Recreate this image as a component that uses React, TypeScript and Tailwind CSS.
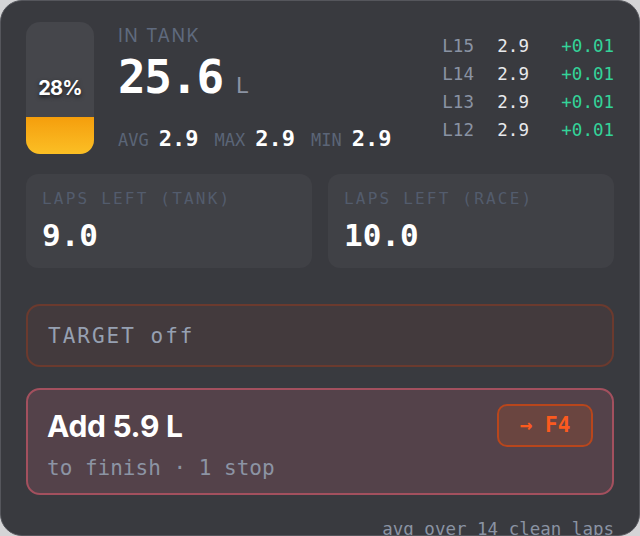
import React from "react";

const mono = "font-['DejaVu_Sans_Mono',monospace]";
const sans = "font-['Inter','Noto_Sans',sans-serif]";

const laps = [
  { lap: "L15", value: "2.9", delta: "+0.01" },
  { lap: "L14", value: "2.9", delta: "+0.01" },
  { lap: "L13", value: "2.9", delta: "+0.01" },
  { lap: "L12", value: "2.9", delta: "+0.01" },
];

function Stat({ label, value }: { label: string; value: string }) {
  return (
    <span className="flex items-baseline gap-[10px]">
      <span className="text-[17px] text-[#5b6577]">{label}</span>
      <span className="text-[22px] font-bold text-white">{value}</span>
    </span>
  );
}

function LapsBox({ label, value }: { label: string; value: string }) {
  return (
    <div className="h-[94px] rounded-[12px] bg-[#404146] px-[16px] pt-[15px]">
      <div className="text-[16px] leading-[20px] tracking-[2.2px] text-[#535c6d]">{label}</div>
      <div className="mt-[8px] text-[31px] font-bold leading-[36px] text-white">{value}</div>
    </div>
  );
}

export default function App() {
  const fuelPct = 28;

  return (
    <div className="h-[536px] w-[640px] bg-[#d4d4d6]">
      <div className={`h-[536px] w-[640px] overflow-hidden rounded-[22px] border border-[#55565c] bg-[#393a3f] px-[25px] pt-[21px] ${mono}`}>
        <div className="flex h-[132px]">
          <div className="relative flex h-[132px] w-[68px] flex-col justify-end overflow-hidden rounded-[14px] bg-[#45464b]">
            <div
              className="bg-gradient-to-b from-[#f59e0b] to-[#fbbf24]"
              style={{ height: `${fuelPct}%` }}
            />
            <div className={`absolute inset-0 flex items-center justify-center text-[20px] font-bold tracking-[-0.8px] text-white [text-shadow:0_2px_4px_rgba(0,0,0,0.6)] ${sans}`}>
              {fuelPct}%
            </div>
          </div>

          <div className="ml-[24px] flex flex-col">
            <div className={`mt-[3px] text-[18px] leading-[22px] tracking-[1.5px] text-[#5f6a7e] ${sans}`}>IN TANK</div>
            <div className="mt-[3px] flex items-baseline">
              <span className="text-[46px] font-bold leading-[54px] tracking-[-1.5px] text-white">25.6</span>
              <span className="ml-[13px] text-[22px] text-[#8b93a3]">L</span>
            </div>
            <div className="mt-[18px] flex gap-[16px]">
              <Stat label="AVG" value="2.9" />
              <Stat label="MAX" value="2.9" />
              <Stat label="MIN" value="2.9" />
            </div>
          </div>

          <div className="ml-auto mt-[10px] flex flex-col">
            {laps.map((l) => (
              <div key={l.lap} className="flex h-[28px] items-center text-[17.5px]">
                <span className="w-[55px] text-[#8a93a3]">{l.lap}</span>
                <span className="w-[64px] text-[#e8e9ec]">{l.value}</span>
                <span className="text-[#34d399]">{l.delta}</span>
              </div>
            ))}
          </div>
        </div>

        <div className="mt-[20px] grid grid-cols-2 gap-[16px]">
          <LapsBox label="LAPS LEFT (TANK)" value="9.0" />
          <LapsBox label="LAPS LEFT (RACE)" value="10.0" />
        </div>

        <div className="mt-[36px] flex h-[63px] items-center rounded-[14px] border-2 border-[#6b3a2e] bg-[#433a3d] px-[20px]">
          <span className="mt-[2px] text-[21px] tracking-[2px] text-[#96a0b2]">TARGET off</span>
        </div>

        <div className="mt-[21px] flex h-[107px] items-start justify-between rounded-[14px] border-2 border-[#a3505e] bg-[#54424a] px-[19px] pt-[14px]">
          <div className="mt-[4px] flex flex-col">
            <span className={`text-[30px] font-bold leading-[36px] tracking-[-0.3px] text-white ${sans}`}>Add 5.9 L</span>
            <span className="mt-[9px] text-[21px] text-[#8c94a4]">to finish · 1 stop</span>
          </div>
          <div className="flex h-[43px] w-[96px] items-center justify-center rounded-[10px] border-2 border-[#b8461c] bg-[#6a4540] text-[21px] font-bold text-[#fb5a1e]">
            → F4
          </div>
        </div>

        <div className="mt-[24px] text-right text-[17.5px] leading-[20px] text-[#8a93a3]">avg over 14 clean laps</div>
      </div>
    </div>
  );
}
